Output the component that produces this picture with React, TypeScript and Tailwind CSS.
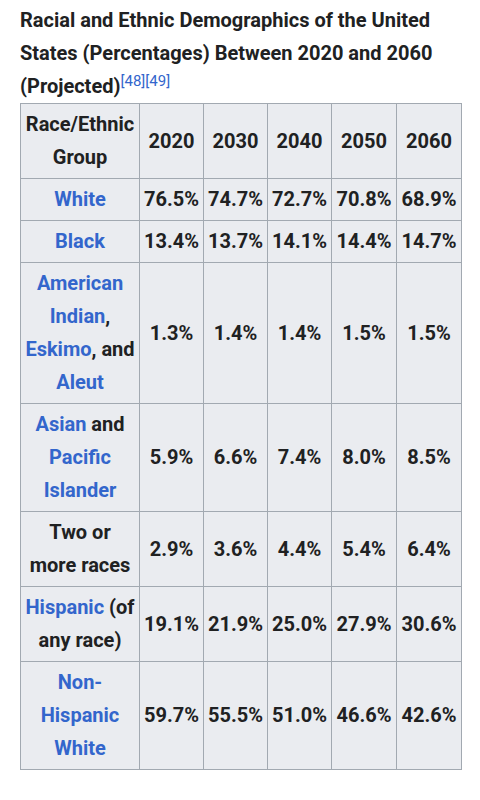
import React from "react";

const years = ["2020", "2030", "2040", "2050", "2060"];

type Row = { label: React.ReactNode; values: string[] };

const L = ({ children }: { children: React.ReactNode }) => (
  <span className="text-[#3366cc]">{children}</span>
);

const rows: Row[] = [
  { label: <L>White</L>, values: ["76.5%", "74.7%", "72.7%", "70.8%", "68.9%"] },
  { label: <L>Black</L>, values: ["13.4%", "13.7%", "14.1%", "14.4%", "14.7%"] },
  {
    label: (
      <>
        <L>American Indian</L>, <L>Eskimo</L>, and <L>Aleut</L>
      </>
    ),
    values: ["1.3%", "1.4%", "1.4%", "1.5%", "1.5%"],
  },
  {
    label: (
      <>
        <L>Asian</L> and <L>Pacific Islander</L>
      </>
    ),
    values: ["5.9%", "6.6%", "7.4%", "8.0%", "8.5%"],
  },
  { label: <>Two or more races</>, values: ["2.9%", "3.6%", "4.4%", "5.4%", "6.4%"] },
  {
    label: (
      <>
        <L>Hispanic</L> (of any race)
      </>
    ),
    values: ["19.1%", "21.9%", "25.0%", "27.9%", "30.6%"],
  },
  { label: <L>Non-Hispanic White</L>, values: ["59.7%", "55.5%", "51.0%", "46.6%", "42.6%"] },
];

export default function App() {
  return (
    <div
      className="w-[480px] min-h-[800px] bg-white text-[#202122] px-5 pt-[4px]"
      style={{ fontFamily: "Roboto, 'Liberation Sans', sans-serif" }}
    >
      <div className="text-[20px] leading-[33px] font-bold">
        Racial and Ethnic Demographics of the United States (Percentages) Between 2020 and 2060
        (Projected)
        <sup className="text-[15px] leading-none font-normal text-[#3366cc] relative top-[-7px]">[48][49]</sup>
      </div>
      <table className="table-fixed border-collapse w-[441px] text-[20px] leading-[33px] font-bold bg-[#eaecf0]">
        <colgroup>
          <col className="w-[119px]" />
          <col className="w-[64px]" />
          <col className="w-[64px]" />
          <col className="w-[64px]" />
          <col className="w-[65px]" />
          <col className="w-[65px]" />
        </colgroup>
        <thead>
          <tr>
            <th className="border border-[#a2a9b1] px-[4px] py-[4px] text-center">
              Race/Ethnic Group
            </th>
            {years.map((y) => (
              <th key={y} className="border border-[#a2a9b1] px-0 py-[4px] text-center">
                {y}
              </th>
            ))}
          </tr>
        </thead>
        <tbody>
          {rows.map((r, i) => (
            <tr key={i}>
              <td className="border border-[#a2a9b1] px-[4px] py-[4px] text-center">{r.label}</td>
              {r.values.map((v, j) => (
                <td key={j} className="border border-[#a2a9b1] px-0 py-[4px] text-center whitespace-nowrap">
                  {v}
                </td>
              ))}
            </tr>
          ))}
        </tbody>
      </table>
    </div>
  );
}
